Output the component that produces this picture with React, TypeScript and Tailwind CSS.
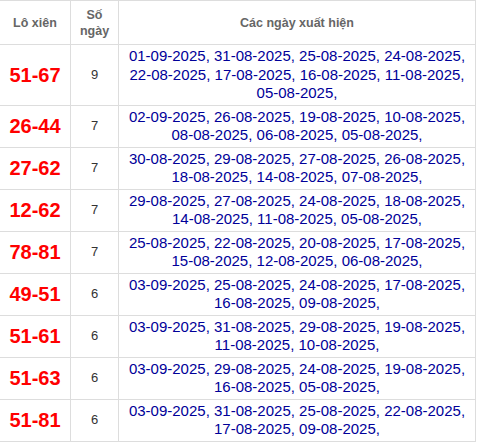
const rows: { pair: string; count: number; dates: string[] }[] = [
  {
    pair: "51-67",
    count: 9,
    dates: ["01-09-2025", "31-08-2025", "25-08-2025", "24-08-2025", "22-08-2025", "17-08-2025", "16-08-2025", "11-08-2025", "05-08-2025"],
  },
  {
    pair: "26-44",
    count: 7,
    dates: ["02-09-2025", "26-08-2025", "19-08-2025", "10-08-2025", "08-08-2025", "06-08-2025", "05-08-2025"],
  },
  {
    pair: "27-62",
    count: 7,
    dates: ["30-08-2025", "29-08-2025", "27-08-2025", "26-08-2025", "18-08-2025", "14-08-2025", "07-08-2025"],
  },
  {
    pair: "12-62",
    count: 7,
    dates: ["29-08-2025", "27-08-2025", "24-08-2025", "18-08-2025", "14-08-2025", "11-08-2025", "05-08-2025"],
  },
  {
    pair: "78-81",
    count: 7,
    dates: ["25-08-2025", "22-08-2025", "20-08-2025", "17-08-2025", "15-08-2025", "12-08-2025", "06-08-2025"],
  },
  {
    pair: "49-51",
    count: 6,
    dates: ["03-09-2025", "25-08-2025", "24-08-2025", "17-08-2025", "16-08-2025", "09-08-2025"],
  },
  {
    pair: "51-61",
    count: 6,
    dates: ["03-09-2025", "31-08-2025", "29-08-2025", "19-08-2025", "11-08-2025", "10-08-2025"],
  },
  {
    pair: "51-63",
    count: 6,
    dates: ["03-09-2025", "29-08-2025", "24-08-2025", "19-08-2025", "16-08-2025", "05-08-2025"],
  },
  {
    pair: "51-81",
    count: 6,
    dates: ["03-09-2025", "31-08-2025", "25-08-2025", "22-08-2025", "17-08-2025", "09-08-2025"],
  },
];

export default function App() {
  return (
    <div className="min-h-screen bg-white font-['Liberation_Sans',Arial,sans-serif]">
      <table className="-ml-px w-[477px] table-fixed border-collapse">
        <colgroup>
          <col className="w-[71px]" />
          <col className="w-[48px]" />
          <col />
        </colgroup>
        <thead>
          <tr className="h-[44px] text-[12.5px] font-bold leading-[16px] text-[#666]">
            <th className="border border-[#ddd] text-center">Lô xiên</th>
            <th className="border border-[#ddd] text-center">
              Số
              <br />
              ngày
            </th>
            <th className="border border-[#ddd] text-center">Các ngày xuất hiện</th>
          </tr>
        </thead>
        <tbody>
          {rows.map((r) => (
            <tr key={r.pair}>
              <td className="border border-[#ddd] text-center text-[20px] font-bold text-[#f00]">{r.pair}</td>
              <td className="border border-[#ddd] text-center text-[13px] text-[#333]">{r.count}</td>
              <td className="border border-[#ddd] px-[6px] py-[2px] text-center text-[15px] leading-[18.5px] text-[#000099]">
                {r.dates.map((d) => d + ", ")}
              </td>
            </tr>
          ))}
        </tbody>
      </table>
    </div>
  );
}
